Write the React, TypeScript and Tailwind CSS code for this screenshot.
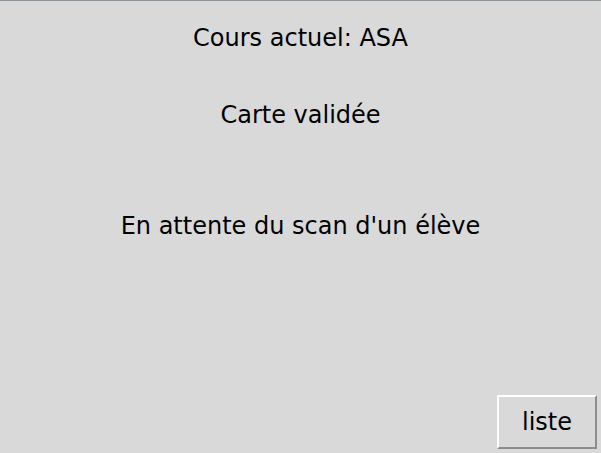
export default function App() {
  return (
    <div className="flex h-[453px] w-[601px] flex-col items-center border-t border-[#8a949c] bg-[#d9d9d9] font-['DejaVu_Sans',sans-serif] text-[24px] leading-[28px] text-black">
      <p className="mt-[23px]">Cours actuel: ASA</p>
      <p className="mt-[49px]">Carte validée</p>
      <p className="mt-[83px]">En attente du scan d'un élève</p>
      <button className="mt-auto mb-[4px] mr-[4px] flex h-[54px] w-[100px] items-center justify-center self-end border-2 border-t-white border-l-white border-r-[#8c8c8c] border-b-[#8c8c8c] bg-[#d9d9d9]">
        liste
      </button>
    </div>
  );
}
